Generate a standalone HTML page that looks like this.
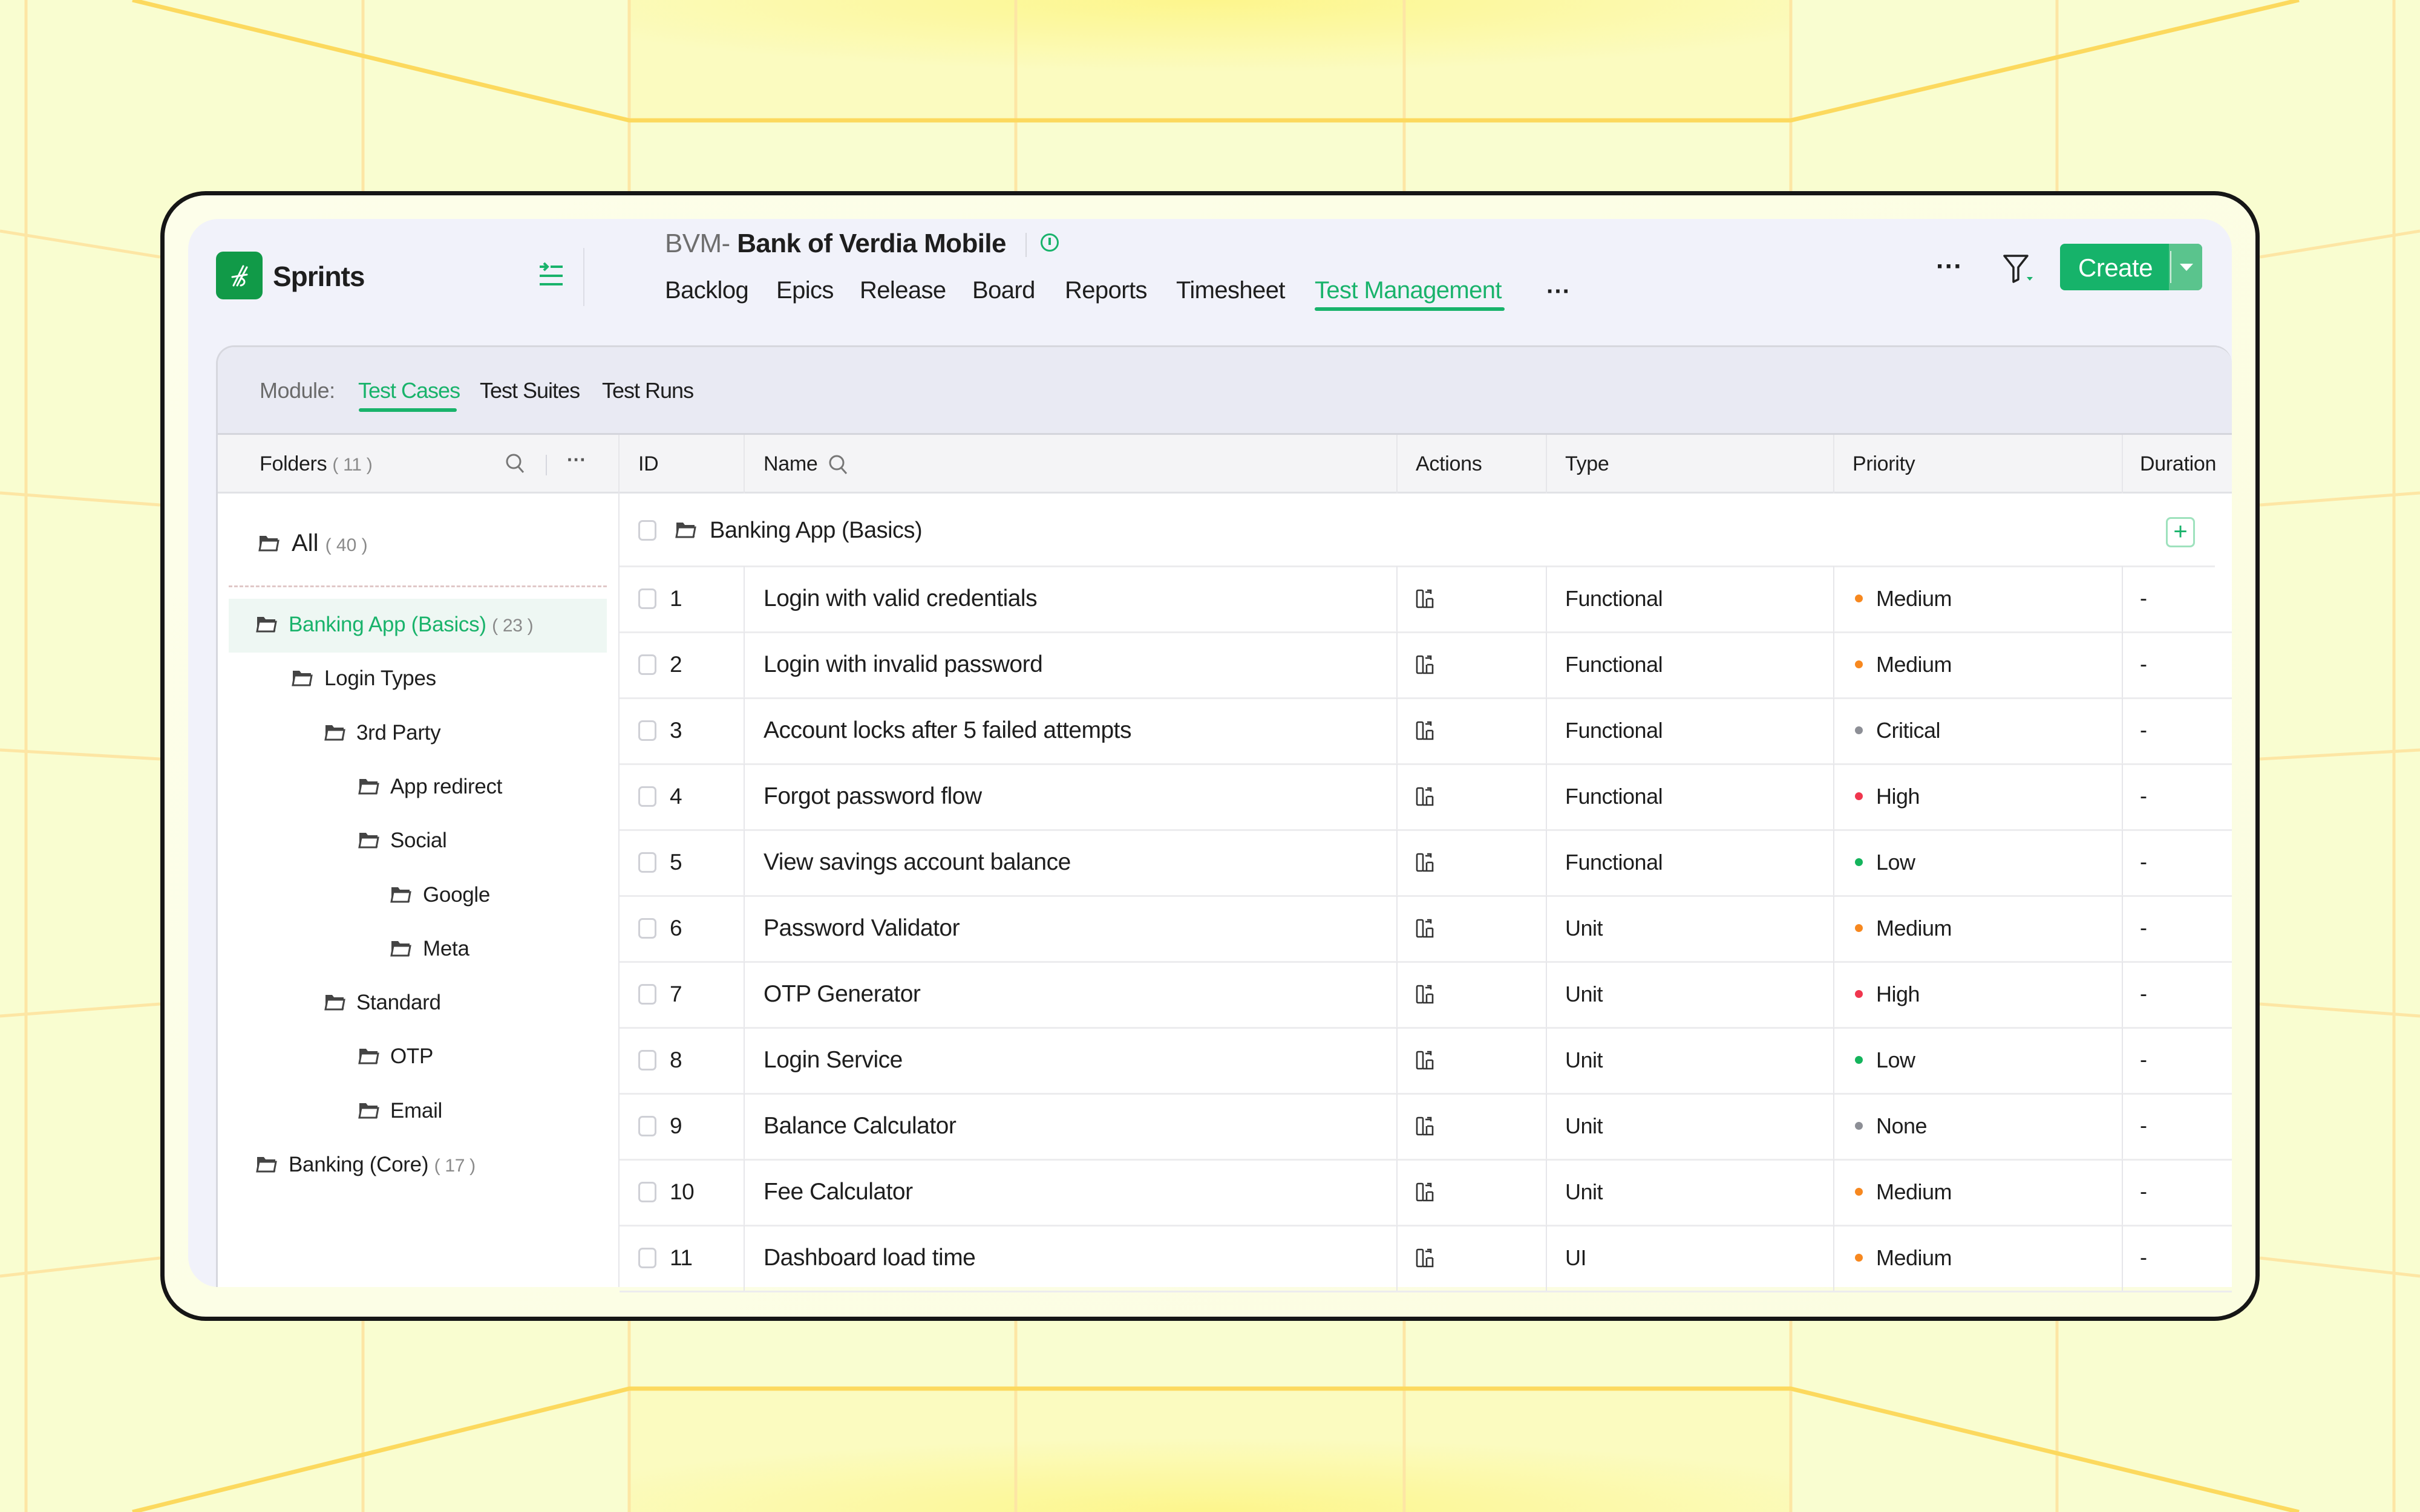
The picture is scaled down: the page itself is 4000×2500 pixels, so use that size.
<!DOCTYPE html>
<html><head><meta charset="utf-8">
<style>
*{margin:0;padding:0;box-sizing:border-box}
body{width:4000px;height:2500px;position:relative;overflow:hidden;background:#f9fdd0;font-family:"Liberation Sans",sans-serif;color:#1e1e1e}
.a{position:absolute;white-space:nowrap}
.t{font-size:36px;letter-spacing:-0.5px}
.nav{font-size:40px;top:458px;letter-spacing:-0.6px}
.hd{font-size:34px;top:748px;letter-spacing:-0.3px}
.vl{position:absolute;width:2px;background:#e6e6ea}
.hl{position:absolute;height:3px;background:#ececee}
.cb{position:absolute;width:30px;height:34px;border:3px solid #cfd0d6;border-radius:7px;background:#fff}
.dot{display:inline-block;width:13px;height:13px;border-radius:50%;margin-right:22px;vertical-align:middle;position:relative;top:-3px}
.fi{position:absolute;width:36px;height:32px}
.ft{font-size:35px;letter-spacing:-0.3px}
.cnt{color:#8a8a8a;font-size:30px}
</style></head><body>
<svg class="a" style="left:0;top:0" width="4000" height="2500" viewBox="0 0 4000 2500">
<defs>
<radialGradient id="g1" cx="50%" cy="0%" r="60%"><stop offset="0" stop-color="#fdf68c"/><stop offset="1" stop-color="#fbfbc0"/></radialGradient>
<radialGradient id="g2" cx="50%" cy="100%" r="60%"><stop offset="0" stop-color="#fdf68c"/><stop offset="1" stop-color="#fbfbc0"/></radialGradient>
</defs>
<polygon points="1040,0 2960,0 2960,199 1040,199" fill="url(#g1)"/>
<polygon points="1040,2296 2960,2296 2960,2500 1040,2500" fill="url(#g2)"/>
<g stroke="#fde6a4" stroke-width="5" fill="none">
<line x1="43" y1="0" x2="43" y2="2500"/><line x1="600" y1="0" x2="600" y2="2500"/><line x1="1040" y1="0" x2="1040" y2="2500"/>
<line x1="1679" y1="0" x2="1679" y2="2500"/><line x1="2321" y1="0" x2="2321" y2="2500"/><line x1="2960" y1="0" x2="2960" y2="2500"/>
<line x1="3400" y1="0" x2="3400" y2="2500"/><line x1="3957" y1="0" x2="3957" y2="2500"/>
<line x1="0" y1="382" x2="265" y2="425"/><line x1="0" y1="815" x2="265" y2="835"/><line x1="0" y1="1240" x2="265" y2="1255"/><line x1="0" y1="1680" x2="265" y2="1660"/><line x1="0" y1="2110" x2="265" y2="2080"/>
<line x1="4000" y1="382" x2="3735" y2="425"/><line x1="4000" y1="815" x2="3735" y2="835"/><line x1="4000" y1="1240" x2="3735" y2="1255"/><line x1="4000" y1="1680" x2="3735" y2="1660"/><line x1="4000" y1="2110" x2="3735" y2="2080"/>
</g>
<g stroke="#fcd95e" stroke-width="7" fill="none">
<polyline points="219,0 1040,199 2960,199 3800,0"/>
<polyline points="219,2500 1040,2296 2960,2296 3800,2500"/>
</g>
</svg>

<div class="a" style="left:265px;top:316px;width:3470px;height:1868px;border:7px solid #161616;border-radius:75px;background:linear-gradient(135deg,#fdfeea,#fbfde0)"></div>
<div class="a" style="left:311px;top:362px;width:3378px;height:1766px;background:#f1f2fa;border-radius:50px;overflow:hidden">
</div>

<!-- header -->
<div class="a" style="left:357px;top:416px;width:77px;height:79px;background:#119a48;border-radius:12px"></div>
<svg class="a" style="left:372px;top:432px" width="48" height="48" viewBox="0 0 48 48" fill="none" stroke="#fff" stroke-width="3" stroke-linecap="round"><path d="M30 8 L14 40 M36 10 L20 40 M12 26 L36 22 M26 28 C34 30 34 38 26 40"/></svg>
<div class="a" style="left:451px;top:430px;font-size:46px;font-weight:bold;letter-spacing:-1px">Sprints</div>
<svg class="a" style="left:888px;top:432px" width="46" height="46" viewBox="0 0 46 46" fill="none" stroke="#19b36b" stroke-width="4"><path d="M4 9h12M11 3l6 6-6 6M22 9h20M4 24h38M4 38h38"/></svg>
<div class="a" style="left:964px;top:410px;width:2px;height:96px;background:#dcdde6"></div>
<div class="a" style="left:1099px;top:378px;font-size:44px;letter-spacing:-0.6px"><span style="color:#6e6e6e">BVM-</span> <b>Bank of Verdia Mobile</b></div>
<div class="a" style="left:1695px;top:385px;width:2px;height:40px;background:#d6d7de"></div>
<div class="a" style="left:1720px;top:386px;width:30px;height:30px;border:3px solid #19b36b;border-radius:50%"></div>
<div class="a" style="left:1733px;top:393px;width:4px;height:12px;background:#19b36b"></div>

<div class="a nav" style="left:1099px">Backlog</div>
<div class="a nav" style="left:1283px">Epics</div>
<div class="a nav" style="left:1421px">Release</div>
<div class="a nav" style="left:1607px">Board</div>
<div class="a nav" style="left:1760px">Reports</div>
<div class="a nav" style="left:1944px">Timesheet</div>
<div class="a nav" style="left:2173px;color:#19b36b">Test Management</div>
<div class="a" style="left:2173px;top:508px;width:314px;height:6px;background:#19b36b;border-radius:3px"></div>
<div class="a" style="left:2556px;top:460px;font-size:40px;font-weight:bold">···</div>
<div class="a" style="left:3200px;top:416px;font-size:44px;font-weight:bold">···</div>
<svg class="a" style="left:3310px;top:420px" width="56" height="50" viewBox="0 0 56 50" fill="none" stroke="#222" stroke-width="3.5" stroke-linejoin="round"><path d="M3 3h38L26 22v20l-8 4V22z"/><path d="M40 38h10l-5 6z" fill="#19b36b" stroke="none"/></svg>
<div class="a" style="left:3405px;top:403px;width:235px;height:77px;background:#16b36a;border-radius:8px;overflow:hidden">
  <div class="a" style="left:180px;top:0;width:55px;height:77px;background:#5ac48d"></div>
  <div class="a" style="left:182px;top:12px;width:2px;height:53px;background:#d8f0e2"></div>
  <div class="a" style="left:198px;top:33px;width:0;height:0;border-left:11px solid transparent;border-right:11px solid transparent;border-top:12px solid #fff"></div>
  <div class="a" style="left:30px;top:16px;font-size:42px;color:#fff;letter-spacing:-0.5px">Create</div>
</div>

<!-- module bar -->
<div class="a" style="left:357px;top:571px;width:3332px;height:1557px;background:#fff;border:3px solid #d6d7de;border-right:none;border-bottom:none;border-radius:30px 30px 0 0;overflow:hidden">
  <div class="a" style="left:0;top:0;width:3332px;height:145px;background:#e9eaf3;border-bottom:3px solid #d4d5dc"></div>
  <div class="a" style="left:0;top:145px;width:3332px;height:97px;background:#f4f4f6;border-bottom:3px solid #e1e2e6"></div>
</div>
<div class="a t" style="left:429px;top:625px;color:#6b6b6b">Module:</div>
<div class="a t" style="left:592px;top:625px;color:#19b36b;letter-spacing:-1px">Test Cases</div>
<div class="a" style="left:593px;top:675px;width:162px;height:6px;background:#19b36b;border-radius:3px"></div>
<div class="a t" style="left:793px;top:625px;letter-spacing:-1px">Test Suites</div>
<div class="a t" style="left:995px;top:625px;letter-spacing:-1px">Test Runs</div>

<!-- header row -->
<div class="a hd" style="left:429px">Folders <span class="cnt">( 11 )</span></div>
<svg class="a" style="left:834px;top:748px" width="36" height="40" viewBox="0 0 36 40" fill="none" stroke="#777" stroke-width="3"><circle cx="15" cy="15" r="11"/><path d="M23 24l8 9"/></svg>
<div class="a" style="left:902px;top:752px;width:2px;height:34px;background:#d6d7de"></div>
<div class="a" style="left:937px;top:742px;font-size:32px;color:#555;font-weight:bold">···</div>
<div class="vl" style="left:1022px;top:719px;height:1409px"></div>
<div class="a hd" style="left:1055px">ID</div>
<div class="vl" style="left:1229px;top:719px;height:97px"></div>
<div class="a hd" style="left:1262px">Name</div>
<svg class="a" style="left:1368px;top:750px" width="36" height="40" viewBox="0 0 36 40" fill="none" stroke="#777" stroke-width="3"><circle cx="15" cy="15" r="11"/><path d="M23 24l8 9"/></svg>
<div class="vl" style="left:2308px;top:719px;height:97px"></div>
<div class="a hd" style="left:2340px">Actions</div>
<div class="vl" style="left:2555px;top:719px;height:97px"></div>
<div class="a hd" style="left:2587px">Type</div>
<div class="vl" style="left:3030px;top:719px;height:97px"></div>
<div class="a hd" style="left:3062px">Priority</div>
<div class="vl" style="left:3507px;top:719px;height:97px"></div>
<div class="a hd" style="left:3537px">Duration</div>

<!-- group row -->
<div class="cb" style="left:1055px;top:860px"></div>
<svg class="fi" style="left:1116px;top:860px" viewBox="0 0 36 32"><path d="M2 4h11l3 4h16v20H2z" fill="#444"/><path d="M5 12h28l-3 16H2z" fill="#fff" stroke="#444" stroke-width="3"/></svg>
<div class="a" style="left:1173px;top:856px;font-size:38px;letter-spacing:-0.5px;font-weight:500">Banking App (Basics)</div>
<div class="a" style="left:3580px;top:855px;width:48px;height:50px;border:3px solid #9ee2bd;border-radius:8px;color:#19b36b;font-size:40px;line-height:42px;text-align:center">+</div>
<div class="hl" style="left:1024px;top:935px;width:2637px"></div>

<div id="rows"></div>

<!-- folder tree -->
<svg class="fi" style="left:427px;top:882px" viewBox="0 0 36 32"><path d="M2 4h11l3 4h16v20H2z" fill="#444"/><path d="M5 12h28l-3 16H2z" fill="#fff" stroke="#444" stroke-width="3"/></svg>
<div class="a" style="left:482px;top:876px;font-size:40px">All <span class="cnt">( 40 )</span></div>
<div class="a" style="left:378px;top:968px;width:625px;border-top:3px dashed #e0c8c8"></div>
<div class="a" style="left:378px;top:990px;width:625px;height:89px;background:#eef7f3"></div>

<div id="tree"></div>

<script>
var rows=[["1","Login with valid credentials","Functional","#f7881f","Medium"],["2","Login with invalid password","Functional","#f7881f","Medium"],["3","Account locks after 5 failed attempts","Functional","#8d8f96","Critical"],["4","Forgot password flow","Functional","#f0364e","High"],["5","View savings account balance","Functional","#14b45c","Low"],["6","Password Validator","Unit","#f7881f","Medium"],["7","OTP Generator","Unit","#f0364e","High"],["8","Login Service","Unit","#14b45c","Low"],["9","Balance Calculator","Unit","#8d8f96","None"],["10","Fee Calculator","Unit","#f7881f","Medium"],["11","Dashboard load time","UI","#f7881f","Medium"]];
var h="";
rows.forEach(function(r,i){
 var top=936+i*109, c=top+54;
 h+='<div class="cb" style="left:1055px;top:'+(c-17)+'px"></div>';
 h+='<div class="a t" style="left:1107px;top:'+(c-21)+'px;font-size:37px">'+r[0]+'</div>';
 h+='<div class="vl" style="left:1229px;top:'+top+'px;height:109px"></div>';
 h+='<div class="a t" style="left:1262px;top:'+(c-22)+'px;font-size:39px">'+r[1]+'</div>';
 h+='<div class="vl" style="left:2308px;top:'+top+'px;height:109px"></div>';
 h+='<svg class="a" style="left:2340px;top:'+(c-17)+'px" width="32" height="34" viewBox="0 0 32 34" fill="none" stroke="#333" stroke-width="2.6"><rect x="2" y="3" width="10" height="28" rx="2"/><path d="M12 31h16V17M19 17h9M19 3h6v6M16 6h9"/><path d="M18 17v14"/></svg>';
 h+='<div class="vl" style="left:2555px;top:'+top+'px;height:109px"></div>';
 h+='<div class="a t" style="left:2587px;top:'+(c-21)+'px">'+r[2]+'</div>';
 h+='<div class="vl" style="left:3030px;top:'+top+'px;height:109px"></div>';
 h+='<div class="a t" style="left:3066px;top:'+(c-21)+'px"><span class="dot" style="background:'+r[3]+'"></span>'+r[4]+'</div>';
 h+='<div class="vl" style="left:3507px;top:'+top+'px;height:109px"></div>';
 h+='<div class="a t" style="left:3537px;top:'+(c-22)+'px">-</div>';
 h+='<div class="hl" style="left:1024px;top:'+(top+108)+'px;width:2665px"></div>';
});
document.getElementById("rows").innerHTML=h;
var tr=[[0,"Banking App (Basics)","23",1],[1,"Login Types"],[2,"3rd Party"],[3,"App redirect"],[3,"Social"],[4,"Google"],[4,"Meta"],[2,"Standard"],[3,"OTP"],[3,"Email"],[0,"Banking (Core)","17"]];
var ix=[423,482,536,592,645],tx=[477,536,589,645,699],t="";
tr.forEach(function(f,i){
 var c=1034+i*89.3;
 t+='<svg class="fi" style="left:'+ix[f[0]]+'px;top:'+(c-18)+'px" viewBox="0 0 36 32"><path d="M2 4h11l3 4h16v20H2z" fill="#444"/><path d="M5 12h28l-3 16H2z" fill="#fff" stroke="#444" stroke-width="3"/></svg>';
 t+='<div class="a ft" style="left:'+tx[f[0]]+'px;top:'+(c-21)+'px;'+(f[3]?'color:#19b36b':'')+'">'+f[1]+(f[2]?' <span class="cnt">( '+f[2]+' )</span>':'')+'</div>';
});
document.getElementById("tree").innerHTML=t;
</script>
</body></html>
